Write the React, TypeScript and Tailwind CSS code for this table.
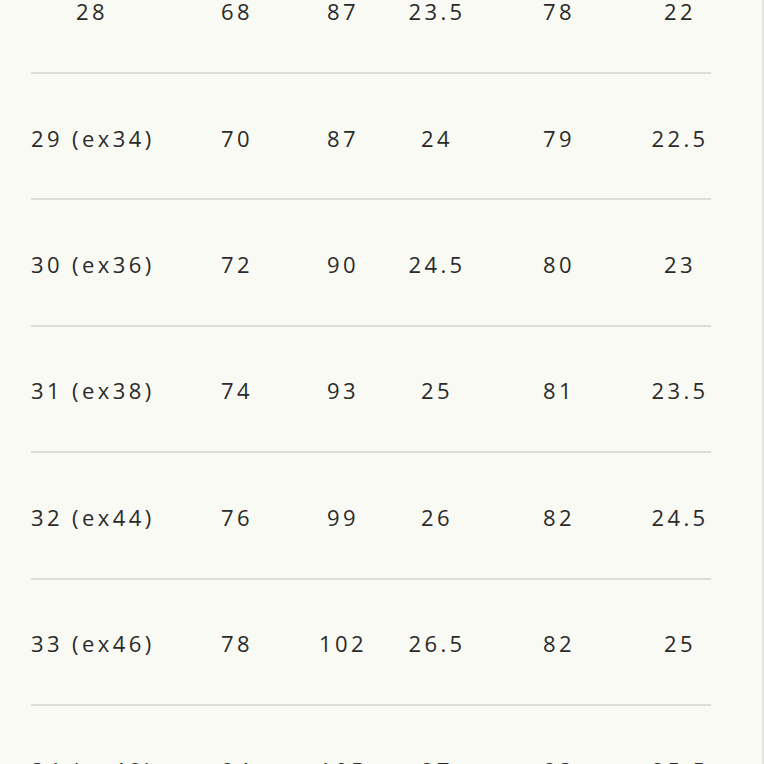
import React from "react";

type Row = [string, string, string, string, string, string];

const rows: Row[] = [
  ["28", "68", "87", "23.5", "78", "22"],
  ["29 (ex34)", "70", "87", "24", "79", "22.5"],
  ["30 (ex36)", "72", "90", "24.5", "80", "23"],
  ["31 (ex38)", "74", "93", "25", "81", "23.5"],
  ["32 (ex44)", "76", "99", "26", "82", "24.5"],
  ["33 (ex46)", "78", "102", "26.5", "82", "25"],
  ["34 (ex48)", "84", "105", "27", "83", "25.5"],
];

// cell widths / left gaps so each column's text lands on its center
const cells = [
  "w-[122px] ml-[31px]",
  "w-[80px] ml-[44px]",
  "w-[80px] ml-[26px]",
  "w-[80px] ml-[14px]",
  "w-[80px] ml-[42px]",
  "w-[80px] ml-[41px]",
];

export default function App() {
  return (
    <div
      className="h-[764px] w-[764px] overflow-hidden border-r-2 border-[#e4e4e0] bg-[#fafaf5] text-[#2a2a2a]"
      style={{ fontFamily: '"Open Sans", "DejaVu Sans", sans-serif' }}
    >
      <div className="mt-[-52.4px]">
        {rows.map((row, i) => (
          <div key={i} className="flex h-[126.4px] items-center pt-[2px]">
            <div className="relative flex h-full w-full items-center">
              {row.map((v, j) => (
                <div
                  key={j}
                  className={`${cells[j]} shrink-0 whitespace-nowrap text-center text-[22px] font-[370] tracking-[0.155em]`}
                >
                  {v}
                </div>
              ))}
              <div className="absolute bottom-0 left-[31px] h-[2px] w-[680px] bg-[#dcdcd8]" />
            </div>
          </div>
        ))}
      </div>
    </div>
  );
}
